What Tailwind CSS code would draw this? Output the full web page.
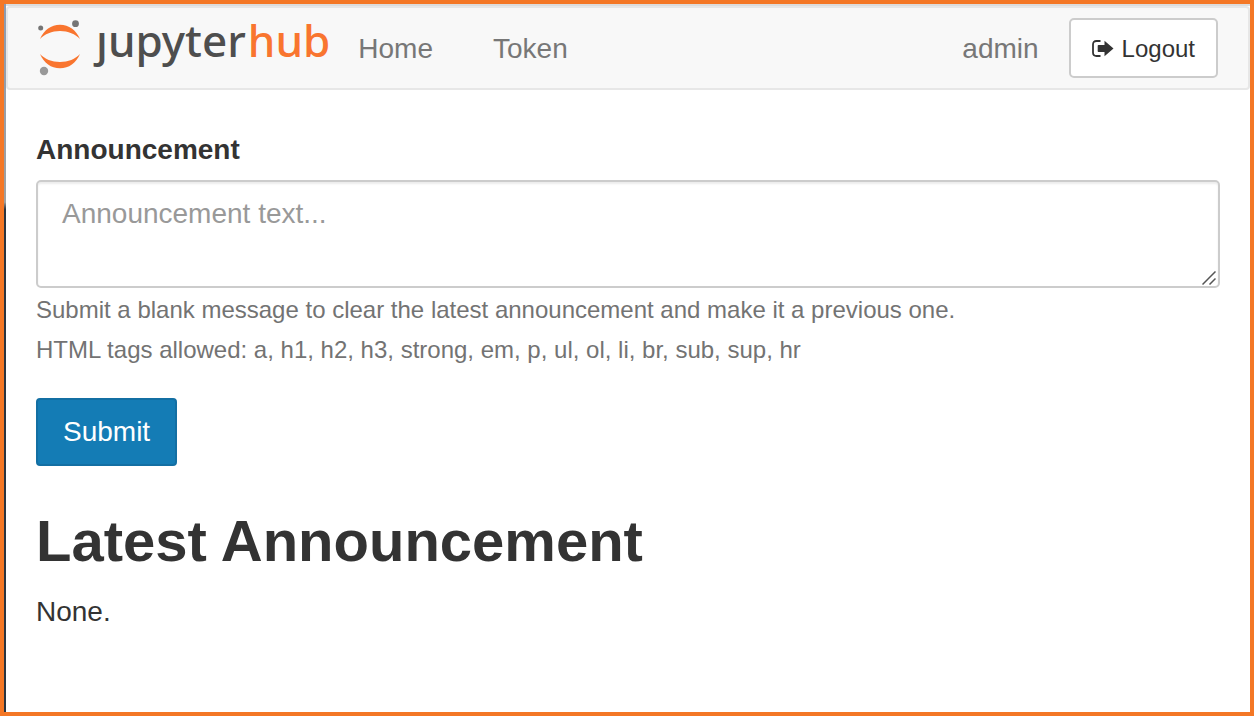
<!DOCTYPE html>
<html lang="en">
<head>
<meta charset="utf-8">
<meta name="viewport" content="width=device-width, initial-scale=1">
<title>JupyterHub</title>
<script src="https://cdn.jsdelivr.net/npm/@tailwindcss/browser@4"></script>
</head>
<body class="flex min-h-screen border-4 border-[#f47725] bg-white font-['Liberation_Sans',Arial,sans-serif] text-[28px] leading-10 text-[#333]">
  <div class="w-[2px] shrink-0 bg-linear-to-b from-[#8d9bb0] from-0% via-[#a0a0a0] via-28% to-[#2a3440] to-29%"></div>
  <div class="min-w-0 flex-1">
    <nav class="border-t-2 border-[#dcdcdc]">
      <div class="flex h-[84px] items-center rounded-[4px] border-2 border-[#e7e7e7] bg-[#f8f8f8] pr-[30px] pl-7 text-[#777]">
        <a href="#" aria-label="jupyterhub" class="flex items-center">
          <svg class="h-14 w-[46px]" viewBox="0 0 46 56" aria-hidden="true">
            <path d="M4 19C8 10 15 4.700 24 4.700S40 10 44 19C39.500 14 32 11 24 11S8.500 14 4 19Z" fill="#f9752f"/>
            <path d="M4 34C8.500 39 16 42 24 42s15.500-3 20-8C40 43 33 48.300 24 48.300S8 43 4 34Z" fill="#f9752f"/>
            <circle cx="4.700" cy="8" r="2.500" fill="#757575"/>
            <circle cx="39.500" cy="3.700" r="3.400" fill="#757575"/>
            <circle cx="8" cy="51" r="4.200" fill="#999"/>
          </svg>
          <span class="flex gap-[2px] pb-4 pl-[14px] font-['Noto_Sans',sans-serif] text-[44px] leading-[60px] font-medium text-[#4e4e4e]"><span>ȷupyter</span><span class="text-[#f9752f]">hub</span></span>
        </a>
        <a href="#" class="ml-7 pt-[2px]">Home</a>
        <a href="#" class="ml-[60px] pt-[2px]">Token</a>
        <span class="ml-auto pt-[2px]">admin</span>
        <a href="#" class="ml-[30px] flex h-[60px] items-center gap-2 rounded-[5px] border-2 border-[#ccc] bg-white px-[21px] pt-[2px] text-2xl text-[#333]">
          <svg class="h-[18px] w-[22px]" viewBox="0 0 22 18" aria-hidden="true">
            <path d="M8.500 1H4.500Q1 1 1 4.500v8Q1 16 4.500 16h4" fill="none" stroke="#333" stroke-width="1.800"/>
            <path d="M12.500 0.800 21.500 8.500 12.500 16.200V12H6.500Q5.700 12 5.700 11.200V5.800Q5.700 5 6.500 5h6Z" fill="#333"/>
          </svg>
          Logout
        </a>
      </div>
    </nav>
    <main class="px-[30px] pt-10">
      <form onsubmit="return false">
        <label for="announcement" class="mb-[10px] block font-bold">Announcement</label>
        <div class="relative">
          <textarea id="announcement" placeholder="Announcement text..." class="block h-[108px] w-full resize-none rounded-[5px] border-2 border-[#ccc] bg-white px-6 py-3 shadow-[inset_0_2px_2px_rgba(0,0,0,0.075)] placeholder:text-[#999]"></textarea>
          <svg class="pointer-events-none absolute right-1 bottom-[3px] size-[14px]" viewBox="0 0 14 14" aria-hidden="true">
            <path d="M0.500 13.500 13.500 0.500M7.500 13.500 13.500 7.500" stroke="#555" stroke-width="1.500"/>
          </svg>
        </div>
        <p class="pt-[2px] text-2xl leading-10 text-[#737373]">Submit a blank message to clear the latest announcement and make it a previous one.<br>HTML tags allowed: a, h1, h2, h3, strong, em, p, ul, ol, li, br, sub, sup, hr</p>
        <button type="submit" class="mt-7 h-[68px] rounded-[4px] border-2 border-[#136fa3] bg-[#147cb5] px-[25px] text-white">Submit</button>
      </form>
      <h1 class="mt-10 text-[58px] leading-[70px] font-bold">Latest Announcement</h1>
      <p class="mt-4">None.</p>
    </main>
  </div>
</body>
</html>
